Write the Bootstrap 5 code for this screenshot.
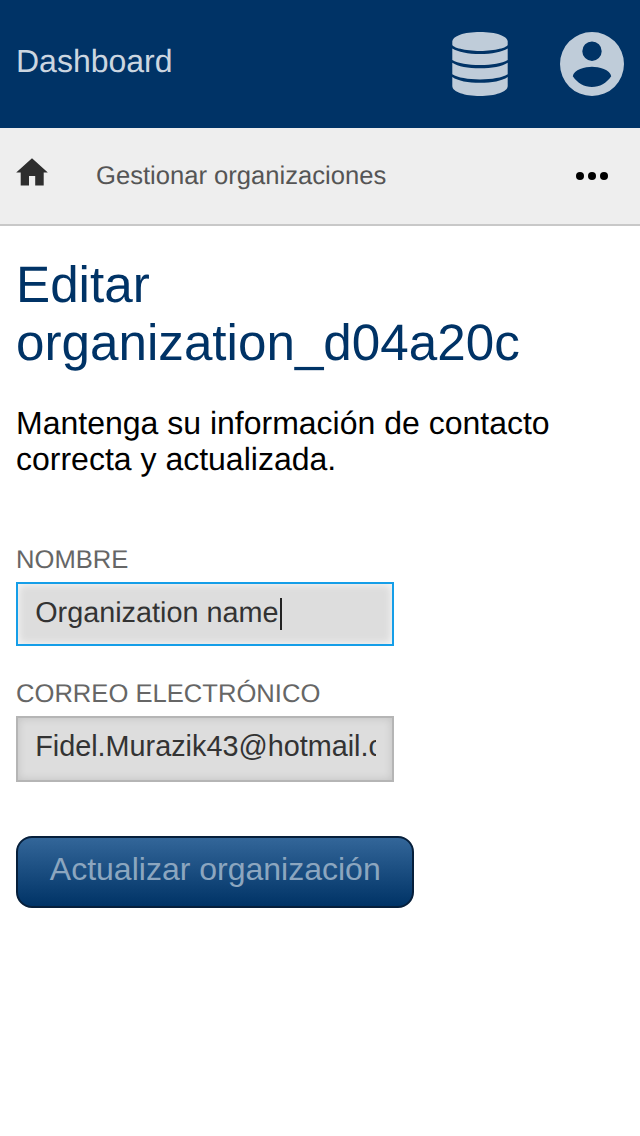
<!DOCTYPE html>
<html lang="es">
<head>
<meta charset="utf-8">
<meta name="viewport" content="width=device-width, initial-scale=1">
<title>Editar organización</title>
<link href="https://cdn.jsdelivr.net/npm/bootstrap@5.3.0/dist/css/bootstrap.min.css" rel="stylesheet">
<style>
body{font-family:"Liberation Sans",Arial,sans-serif;background:#fff;color:#000;text-rendering:geometricPrecision}
.topbar{height:128px;background:#036;--bs-navbar-padding-y:0}
.topbar .navbar-brand{font-size:32px;line-height:36px;color:#ccd6e0;margin-top:-7px;padding:0}
.topbar-icons{gap:52px;color:#bfccd9}
.crumbs{height:98px;background:#eee;border-bottom:2px solid #c8c8c8;font-size:25.6px}
.crumbs a{color:#555}
.crumbs .home{margin-right:48px;color:#2e2e2e}
.crumbs .home svg{margin-top:-8px}
.content{padding-top:30px}
.page-title{font-size:51.2px;line-height:58px;font-weight:400;color:#036;margin:0 0 33px}
.intro{font-size:32px;line-height:36px;margin:0 0 65px}
.form-label{display:block;font-size:25.6px;line-height:36px;color:#666;margin:0 0 4px}
.field-group{margin-bottom:30px}
.field{width:378px;height:66px;border:2px solid #b5b5b5;border-radius:0;background:#ddd;color:#333;font-size:28.8px;line-height:32px;padding:12px 16px 18px 17.2px;box-shadow:inset 0 0 8px rgba(0,0,0,.13);white-space:nowrap;overflow:hidden}
.field.active{height:64px;padding-top:13px;padding-bottom:17px;border-color:#159ee8;box-shadow:inset 0 0 8px rgba(255,255,255,.9)}
.caret{display:inline-block;width:2px;height:32px;background:#222;vertical-align:top;margin-left:1px;margin-top:1px}
.btn-update{width:398px;height:72px;border:2px solid #061f3b;border-radius:16px;background:linear-gradient(#369,#036);color:#8ca6bf;font-size:32px;line-height:36px;padding:0 0 7px .5px;margin-top:54px}
.btn-update:disabled{color:#8ca6bf;opacity:1;border-color:#061f3b}
</style>
</head>
<body>
<nav class="navbar topbar px-3 d-flex justify-content-between align-items-center flex-nowrap">
  <a class="navbar-brand" href="#">Dashboard</a>
  <div class="d-flex align-items-center topbar-icons">
    <svg width="56" height="64" viewBox="0 0 56 64" fill="currentColor" aria-label="Datos">
      <path d="M.3 9.800C.3 4 12 0 28 0s27.700 4 27.700 9.800v3C55.700 15.500 43 19 28 19S.3 15.500.3 12.800z"/>
      <path d="M.3 16.500C6 20 16 22 28 22s22-2 27.700-5.500v11.500C50 31.300 40 33 28 33S6 31.300.3 28z"/>
      <path d="M.3 30.700C6 34.500 16 36.300 28 36.300s22-1.800 27.700-5.600v11.500C50 45.600 40 47.400 28 47.400S6 45.600.3 42.200z"/>
      <path d="M.3 45C6 49 16 50.800 28 50.800s22-1.800 27.700-5.800v9C55.700 60 43 64 28 64S.3 60 .3 54z"/>
    </svg>
    <svg width="64" height="64" viewBox="0 0 64 64" fill="currentColor" fill-rule="evenodd" aria-label="Cuenta">
      <path d="M32 0a32 32 0 1 1 0 64 32 32 0 0 1 0-64zm0 9.500a9.700 9.700 0 1 0 0 19.400 9.700 9.700 0 0 0 0-19.400zM12.800 44.300C17.500 51.200 24.300 55 32 55s14.500-3.800 19.200-10.700C50.500 37.500 38.500 34.800 32 34.800S13.500 37.500 12.800 44.300z"/>
    </svg>
  </div>
</nav>
<div class="crumbs d-flex align-items-center px-3">
  <a class="home d-flex" href="#" aria-label="Inicio"><svg width="32" height="28" viewBox="0 0 32 28" fill="currentColor"><path d="M16 .3 31.800 14.500H27.700V27.500H19.200V18H13V27.500H4.700V14.500H.2z"/></svg></a>
  <a class="text-decoration-none" href="#">Gestionar organizaciones</a>
  <svg class="ms-auto me-3" width="32" height="8" viewBox="0 0 32 8" aria-label="Más"><circle cx="4" cy="4" r="4"/><circle cx="16" cy="4" r="4"/><circle cx="28" cy="4" r="4"/></svg>
</div>
<main class="px-3 content">
  <h1 class="page-title">Editar organization_d04a20c</h1>
  <p class="intro">Mantenga su información de contacto correcta y actualizada.</p>
  <form>
    <div class="field-group">
      <span class="form-label">NOMBRE</span>
      <div class="form-control field active" role="textbox">Organization name<span class="caret"></span></div>
    </div>
    <div>
      <label class="form-label" for="mail">CORREO ELECTRÓNICO</label>
      <input class="form-control field" id="mail" type="email" value="Fidel.Murazik43@hotmail.com">
    </div>
    <button class="btn btn-update" type="button" disabled>Actualizar organización</button>
  </form>
</main>
<script src="https://cdn.jsdelivr.net/npm/bootstrap@5.3.0/dist/js/bootstrap.bundle.min.js"></script>
</body>
</html>
